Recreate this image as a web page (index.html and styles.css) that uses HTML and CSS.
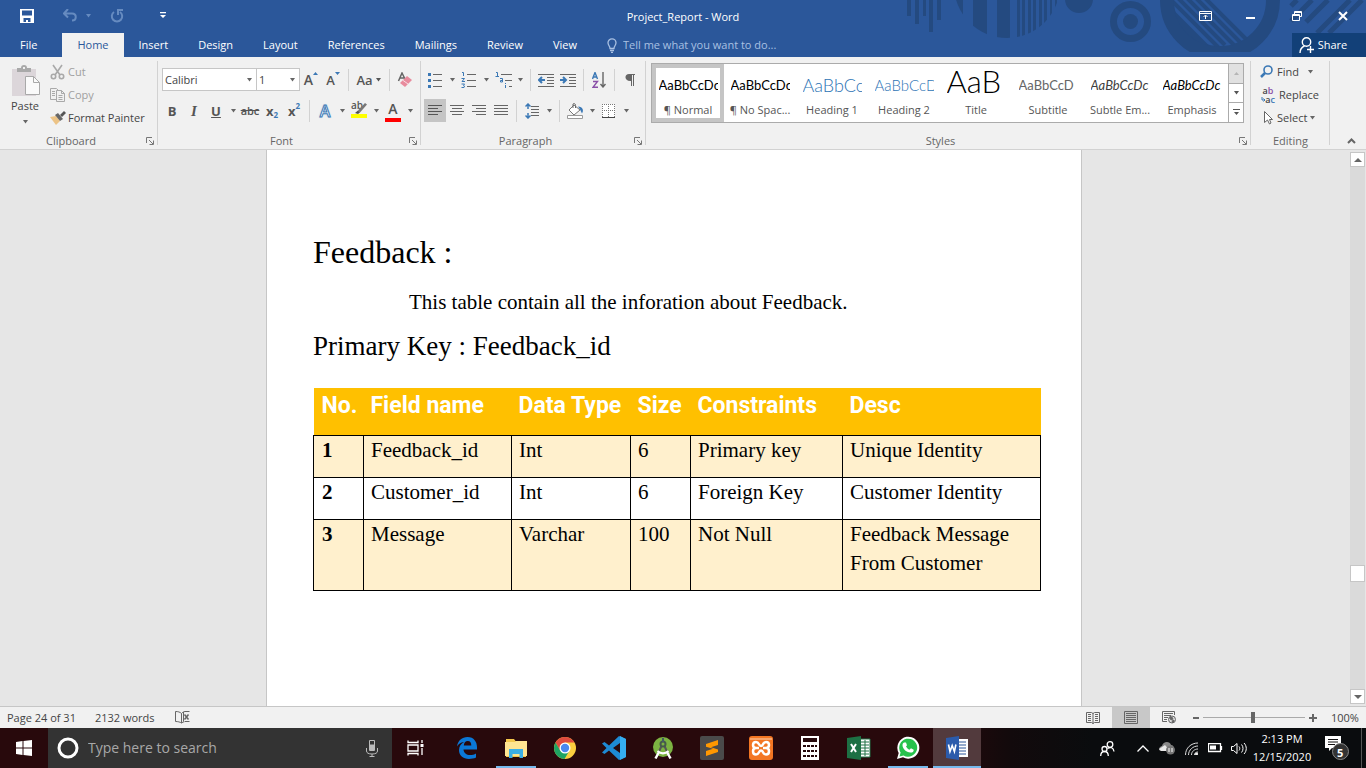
FILE: index.html
```html
<!DOCTYPE html>
<html lang="en">
<head>
<meta charset="utf-8">
<title>Project_Report - Word</title>
<link rel="stylesheet" href="styles.css">
</head>
<body>
<svg class="sprite" aria-hidden="true">
  <symbol id="caret" viewBox="0 0 7 4"><path d="M1 0h5L3.500 3.500z" fill="currentColor"/></symbol>
  <symbol id="launcher" viewBox="0 0 8 8"><path d="M.5 6V.5H6M3 3l4 4M7.500 3.500v4h-4" fill="none" stroke="#777"/></symbol>
</svg>

<header class="header">
  <svg class="header-art" width="461" height="57" viewBox="905 0 461 57" fill="#244a80" aria-hidden="true">
    <defs>
      <clipPath id="disc"><circle cx="1007" cy="-15" r="53"/></clipPath>
      <clipPath id="bowl"><circle cx="1220" cy="0" r="47"/></clipPath>
      <clipPath id="bowl-cut"><rect x="1150" y="0" width="140" height="52"/></clipPath>
    </defs>
    <path d="M907 0h4v16h-4zM915 0h4v24h-4zM923 0h3v16h-3zM929 0h4v32h-4zM937 0h4v20h-4z"/>
    <path clip-path="url(#disc)" d="M954 0h9v40h-9zM973 0h14v40h-14zM997 0h13v40h-13zM1017 0h3v40h-3zM1022 0h3v40h-3zM1028 0h3v40h-3zM1033 0h3v40h-3zM1039 0h3v40h-3zM1044 0h3v40h-3zM1050 0h2v40h-2zM1055 0h2v40h-2z"/>
    <circle cx="1079" cy="-1" r="14"/>
    <circle cx="1130.500" cy="21.500" r="17" fill="none" stroke="#244a80" stroke-width="7"/>
    <circle cx="1130.500" cy="21.500" r="7.500"/>
    <g clip-path="url(#bowl-cut)"><circle cx="1220" cy="0" r="53" fill="none" stroke="#244a80" stroke-width="14"/></g>
    <g clip-path="url(#bowl)" stroke="#244a80" stroke-width="4">
      <path d="M1202-5l50 50M1193-5l50 50M1184-5l50 50M1175-5l50 50M1166-5l55 55"/><path d="M1160 5l50 50" stroke-width="12"/>
    </g>
    <path d="M1291 6l6-6M1291 21l21-21M1306 22l22-22M1317 33l33-33M1329 33l33-33" stroke="#244a80" stroke-width="5"/>
  </svg>
  <div class="titlebar">
    <div class="quick">
      <button class="q-save" aria-label="Save"><svg width="14" height="14" viewBox="0 0 14 14"><path d="M0 0h14v14H0zM2 1.500v5h10v-5zM3.500 9v4H6v-2h2v2h2.500V9z" fill="#fff" fill-rule="evenodd"/></svg></button>
      <button class="q-undo" aria-label="Undo"><svg width="14" height="13" viewBox="0 0 14 13" fill="none" stroke="#668bc0" stroke-width="2"><path d="M5 0L1 4.500 5 8.500M1 4.500h8c5 0 5 7 0 7"/></svg></button>
      <button class="q-caret" aria-label="Undo list"><svg width="7" height="4"><use href="#caret"/></svg></button>
      <button class="q-redo" aria-label="Redo"><svg width="14" height="14" viewBox="0 0 14 14" fill="none" stroke="#668bc0" stroke-width="2"><path d="M4 3a5.200 5.200 0 1 0 6 0M8 6V1h5"/></svg></button>
      <button class="q-more" aria-label="Customize toolbar"><svg width="6" height="7" viewBox="0 0 6 7" fill="#fff"><path d="M0 0h6v1.200H0zM0 3h6L3 6z"/></svg></button>
    </div>
    <h1 class="title">Project_Report - Word</h1>
    <div class="window-buttons">
      <button aria-label="Ribbon display"><svg width="13" height="10" viewBox="0 0 13 10" fill="none" stroke="#fff"><path d="M.5.500h12v9H.5zM.5 2.500h12M6.500 8V4.500M4.500 6l2-2 2 2"/></svg></button>
      <button aria-label="Minimize"><svg width="10" height="10"><path d="M0 6h9v2H0z" fill="#fff"/></svg></button>
      <button aria-label="Restore"><svg width="10" height="10" viewBox="0 0 10 10" fill="none" stroke="#fff"><path d="M2.500 3V.5h7v5H7M2.500 1.500h7M.5 3.500h7v6h-7zM.5 4.500h7"/></svg></button>
      <button aria-label="Close"><svg width="10" height="10" viewBox="0 0 10 10"><path d="M1 1l8 8M9 1L1 9" stroke="#fff" stroke-width="2"/></svg></button>
    </div>
  </div>
  <nav class="tabs">
    <button class="tab tab-file">File</button>
    <button class="tab tab-active">Home</button>
    <button class="tab">Insert</button>
    <button class="tab">Design</button>
    <button class="tab">Layout</button>
    <button class="tab">References</button>
    <button class="tab">Mailings</button>
    <button class="tab">Review</button>
    <button class="tab">View</button>
    <label class="tell">
      <svg width="10" height="15" viewBox="0 0 10 15" fill="none" stroke="#a9c0e2"><path d="M3 10.500C3 8 1 7.500 1 4.800a4 4 0 0 1 8 0C9 7.500 7 8 7 10.500zM3 12.500h4M4 14.300h2" stroke-width="1.300"/></svg>
      <input type="text" aria-label="Tell me" placeholder="Tell me what you want to do...">
    </label>
    <button class="share"><svg width="15" height="16" viewBox="0 0 15 16" fill="none" stroke="#fff" stroke-width="1.400"><circle cx="7.500" cy="5" r="4.200"/><path d="M1 16c0-4 2-6 4.500-7M8 12.500h7M11.500 9v7"/></svg>Share</button>
  </nav>
</header>

<section class="ribbon" aria-label="Ribbon">
  <div class="group g-clipboard">
    <div class="group-body clip-body">
      <button class="paste">
        <svg width="29" height="31" viewBox="0 0 29 31"><path d="M1 4h24v27H1z" fill="#dcd6da"/><path d="M6 7V3h4a3 3 0 0 1 6 0h4v4z" fill="#a9a9a9"/><path d="M12 2h2v2h-2z" fill="#f0f0f0"/><path d="M14.500 11.500h8l6 6v12h-14z" fill="#fafafa" stroke="#a9a9a9"/><path d="M22.500 11.500v6h6" fill="none" stroke="#a9a9a9"/></svg>
        <span>Paste</span>
        <svg width="7" height="4"><use href="#caret"/></svg>
      </button>
      <div class="stack">
        <button class="item item-off"><svg width="16" height="16" viewBox="0 0 16 16" fill="none" stroke="#a9a9a9" stroke-width="1.600"><path d="M3 1l7 10M12 1L5 11"/><circle cx="3.500" cy="12.500" r="2.200"/><circle cx="11.500" cy="12.500" r="2.200"/></svg>Cut</button>
        <button class="item item-off"><svg width="16" height="16" viewBox="0 0 16 16" fill="#f0f0f0" stroke="#a9a9a9"><path d="M.5 1.500h6l2 2v9h-8zM2 4.500h3M2 6.500h3M2 8.500h3"/><path d="M6.500 3.500h5l3 3v8h-8zM8.500 8.500h4M8.500 10.500h4M8.500 12.500h4M11.500 3.500v3h3"/></svg>Copy</button>
        <button class="item"><svg width="16" height="16" viewBox="0 0 16 16"><path d="M0 7l6-1 4 5-4 4z" fill="#ecc386"/><path d="M5 5l3-2 5 6-3 2z" fill="#666"/><path d="M10 5l4-4 2 2-4 4z" fill="#555"/></svg>Format Painter</button>
      </div>
    </div>
    <div class="group-foot"><span>Clipboard</span><button aria-label="Clipboard settings"><svg width="8" height="8"><use href="#launcher"/></svg></button></div>
  </div>

  <div class="group g-font">
    <div class="group-body rows">
      <div class="row">
        <span class="pick pick-font"><select aria-label="Font"><option>Calibri</option></select><svg width="7" height="4"><use href="#caret"/></svg></span>
        <span class="pick pick-size"><select aria-label="Font size"><option>1</option></select><svg width="7" height="4"><use href="#caret"/></svg></span>
        <button class="tool glyph grow" aria-label="Grow font">A<svg width="5" height="3"><path d="M0 3h5L2.500 0z" fill="#3b78b5"/></svg></button>
        <button class="tool glyph shrink" aria-label="Shrink font">A<svg width="5" height="3"><path d="M0 0h5L2.500 3z" fill="#3b78b5"/></svg></button>
        <i class="sep"></i>
        <button class="tool wide glyph">Aa <svg width="7" height="4"><use href="#caret"/></svg></button>
        <i class="sep"></i>
        <button class="tool" aria-label="Clear formatting"><svg width="16" height="16" viewBox="0 0 16 16"><path d="M1.500 9L5 1l3 6M3 6h4" fill="none" stroke="#666" stroke-width="1.500"/><path d="M10 4l5 4-7 7-5-4z" fill="#e88b9d"/><path d="M5.500 8l5.500 4" stroke="#f7dfe3"/></svg></button>
      </div>
      <div class="row">
        <button class="tool glyph bold">B</button>
        <button class="tool glyph ital">I</button>
        <button class="tool glyph under">U</button>
        <button class="drop" aria-label="Underline styles"><svg width="7" height="4"><use href="#caret"/></svg></button>
        <button class="tool glyph strike">abc</button>
        <button class="tool glyph script-btn">x<sub>2</sub></button>
        <button class="tool glyph script-btn">x<sup>2</sup></button>
        <i class="sep"></i>
        <button class="tool glyph effect">A</button>
        <button class="drop" aria-label="Text effects list"><svg width="7" height="4"><use href="#caret"/></svg></button>
        <button class="tool glyph mark" aria-label="Highlight">ab<svg width="16" height="15" viewBox="0 0 16 15"><path d="M14 0l2 1.500-7 8-2-2z" fill="#777"/><path d="M4 10l3-2.500 2 2L7 11z" fill="#555"/><path d="M0 11h16v4H0z" fill="#ff0"/></svg></button>
        <button class="drop" aria-label="Highlight colors"><svg width="7" height="4"><use href="#caret"/></svg></button>
        <button class="tool glyph color">A</button>
        <button class="drop" aria-label="Font colors"><svg width="7" height="4"><use href="#caret"/></svg></button>
      </div>
    </div>
    <div class="group-foot"><span>Font</span><button aria-label="Font settings"><svg width="8" height="8"><use href="#launcher"/></svg></button></div>
  </div>

  <div class="group g-para">
    <div class="group-body rows">
      <div class="row">
        <button class="tool" aria-label="Bullets"><svg width="16" height="16" viewBox="0 0 16 16"><path d="M6 2.500h9M6 8.500h9M6 14.500h9" stroke="#666"/><path d="M1 1h3v3H1zM1 7h3v3H1zM1 13h3v3H1z" fill="#3b78b5"/></svg></button>
        <button class="drop" aria-label="Bullet styles"><svg width="7" height="4"><use href="#caret"/></svg></button>
        <button class="tool" aria-label="Numbering"><svg width="16" height="16" viewBox="0 0 16 16"><path d="M6 2.500h9M6 8.500h9M6 14.500h9" stroke="#666"/><path d="M1 .5h1.500V4M.5 6.500h3L1 9.500h3M.5 12h3l-1 1.500 1 .5-.5 1.500H.5" fill="none" stroke="#3b78b5"/></svg></button>
        <button class="drop" aria-label="Number styles"><svg width="7" height="4"><use href="#caret"/></svg></button>
        <button class="tool" aria-label="Multilevel list"><svg width="17" height="16" viewBox="0 0 17 16"><path d="M6 2.500h11M10 8.500h7M14 14.500h3" stroke="#666"/><path d="M1 .5h1.500V4M.5 4.500h3.500M5 6.500h2.500v3.500M7.500 8.500h-2v1.500h2M10.500 11v1M10.500 13v3" fill="none" stroke="#3b78b5"/></svg></button>
        <button class="drop" aria-label="List levels"><svg width="7" height="4"><use href="#caret"/></svg></button>
        <i class="sep"></i>
        <button class="tool" aria-label="Decrease indent"><svg width="16" height="14" viewBox="0 0 16 14"><path d="M0 1.500h16M9 4.500h7M9 7.500h7M9 10.500h7M0 13.500h16" stroke="#666"/><path d="M7 7H1M4 4L1 7l3 3" stroke="#3b78b5" stroke-width="2" fill="none"/></svg></button>
        <button class="tool" aria-label="Increase indent"><svg width="16" height="14" viewBox="0 0 16 14"><path d="M0 1.500h16M9 4.500h7M9 7.500h7M9 10.500h7M0 13.500h16" stroke="#666"/><path d="M0 7h6M3 4l3 3-3 3" stroke="#3b78b5" stroke-width="2" fill="none"/></svg></button>
        <i class="sep"></i>
        <button class="tool" aria-label="Sort"><svg width="14" height="16" viewBox="0 0 14 16" fill="none" stroke-width="1.400"><path d="M.5 7l2.500-6.500L5.500 7M1.500 5h3" stroke="#3b78b5"/><path d="M1 9.500h4.500L1 15.300h5" stroke="#8a50a8"/><path d="M11 0v15M8.500 12l2.500 3 2.500-3" stroke="#666"/></svg></button>
        <i class="sep"></i>
        <button class="tool" aria-label="Show marks"><svg width="10" height="12" viewBox="0 0 10 12"><path d="M10 0v1H9v11H8V1H7v11H6V7C-1 7.500-1 0 4 0z" fill="#666"/></svg></button>
      </div>
      <div class="row">
        <button class="tool tool-on" aria-label="Align left"><svg width="14" height="12" viewBox="0 0 14 12" stroke="#555"><path d="M0 .5h14M0 3.500h10M0 6.500h14M0 9.500h10"/></svg></button>
        <button class="tool" aria-label="Center"><svg width="14" height="12" viewBox="0 0 14 12" stroke="#666"><path d="M0 .5h14M2 3.500h10M0 6.500h14M2 9.500h10"/></svg></button>
        <button class="tool" aria-label="Align right"><svg width="14" height="12" viewBox="0 0 14 12" stroke="#666"><path d="M0 .5h14M4 3.500h10M0 6.500h14M4 9.500h10"/></svg></button>
        <button class="tool" aria-label="Justify"><svg width="14" height="12" viewBox="0 0 14 12" stroke="#666"><path d="M0 .5h14M0 3.500h14M0 6.500h14M0 9.500h14"/></svg></button>
        <i class="sep"></i>
        <button class="tool" aria-label="Line spacing"><svg width="14" height="16" viewBox="0 0 14 16" fill="none"><path d="M6 3.500h8M6 6.500h8M6 9.500h8M6 12.500h8" stroke="#666"/><path d="M3 1v5M.5 3.500L3 1l2.500 2.500M3 15v-5M.5 12.500L3 15l2.500-2.500" stroke="#3b78b5" stroke-width="1.500"/></svg></button>
        <button class="drop" aria-label="Line spacing list"><svg width="7" height="4"><use href="#caret"/></svg></button>
        <i class="sep"></i>
        <button class="tool" aria-label="Shading"><svg width="17" height="16" viewBox="0 0 17 16"><path d="M7 2l6 5-6 5-5-5z" fill="#fff" stroke="#777"/><path d="M6 5V1c1-1 3 0 2.500 1.500V5" fill="none" stroke="#666"/><path d="M11 3.500c5 0 6 4 4 7l-2-4z" fill="#3b78b5"/><path d="M.5 12.500h15v3H.5z" fill="#fff" stroke="#999"/></svg></button>
        <button class="drop" aria-label="Shading colors"><svg width="7" height="4"><use href="#caret"/></svg></button>
        <button class="tool" aria-label="Borders"><svg width="14" height="14" viewBox="0 0 14 14" fill="#fff" stroke="#777"><path d="M0 0h13v13H0z" stroke="none"/><path d="M0 .5h13M12.500 0v13M.5 0v13M6.500 0v13M0 6.500h13" stroke-dasharray="1 1"/><path d="M0 13.500h13" stroke="#444"/></svg></button>
        <button class="drop" aria-label="Border styles"><svg width="7" height="4"><use href="#caret"/></svg></button>
      </div>
    </div>
    <div class="group-foot"><span>Paragraph</span><button aria-label="Paragraph settings"><svg width="8" height="8"><use href="#launcher"/></svg></button></div>
  </div>

  <div class="group g-styles">
    <div class="group-body">
      <div class="gallery">
        <button class="style style-on"><span class="sample">AaBbCcDc</span><span>¶ Normal</span></button>
        <button class="style"><span class="sample">AaBbCcDc</span><span>¶ No Spac...</span></button>
        <button class="style"><span class="sample s-h1">AaBbCc</span><span>Heading 1</span></button>
        <button class="style"><span class="sample s-h2">AaBbCcD</span><span>Heading 2</span></button>
        <button class="style"><span class="sample s-title">AaB</span><span>Title</span></button>
        <button class="style"><span class="sample s-sub">AaBbCcD</span><span>Subtitle</span></button>
        <button class="style"><span class="sample s-subtle">AaBbCcDc</span><span>Subtle Em...</span></button>
        <button class="style"><span class="sample s-em">AaBbCcDc</span><span>Emphasis</span></button>
        <div class="gallery-nav">
          <button class="nav-off" aria-label="Previous styles"><svg width="5" height="3"><path d="M0 3h5L2.500 0z" fill="#b5b5b5"/></svg></button>
          <button aria-label="Next styles"><svg width="7" height="4"><use href="#caret"/></svg></button>
          <button aria-label="All styles"><svg width="7" height="7" viewBox="0 0 7 7" fill="#555"><path d="M0 0h7v1H0zM1 3h5L3.500 6z"/></svg></button>
        </div>
      </div>
    </div>
    <div class="group-foot"><span>Styles</span><button aria-label="Styles settings"><svg width="8" height="8"><use href="#launcher"/></svg></button></div>
  </div>

  <div class="group g-edit">
    <div class="group-body">
      <div class="stack">
        <button class="item"><svg width="16" height="16" viewBox="0 0 16 16" fill="none" stroke="#3b78b5"><circle cx="9" cy="6" r="4" stroke-width="1.600"/><path d="M6 9l-4 4" stroke-width="2.500"/></svg>Find <svg class="item-caret gap" width="7" height="4"><use href="#caret"/></svg></button>
        <button class="item"><span class="replace-icon"><b>a<em>b</em></b><b><svg width="4" height="5"><path d="M1 0v3h3M2.500 1.500L4 3 2.500 4.500" fill="none" stroke="#3b78b5"/></svg>a<i>c</i></b></span>Replace</button>
        <button class="item"><svg width="16" height="16" viewBox="0 0 16 16"><path d="M5.500 1.500v11l3-2.500 2 4 1.500-1-1.500-3.500h3z" fill="#fff" stroke="#666"/></svg>Select<svg class="item-caret" width="7" height="4"><use href="#caret"/></svg></button>
      </div>
    </div>
    <div class="group-foot"><span>Editing</span></div>
  </div>
  <button class="collapse" aria-label="Collapse ribbon"><svg width="9" height="6" viewBox="0 0 9 6"><path d="M1 5l3.500-3.500L8 5" fill="none" stroke="#666" stroke-width="2"/></svg></button>
</section>

<main class="workspace">
  <div class="canvas">
    <article class="page">
      <h2 class="doc-heading">Feedback :</h2>
      <p class="doc-text">This table contain all the inforation about Feedback.</p>
      <h3 class="doc-key">Primary Key : Feedback_id</h3>
      <table class="fields">
        <colgroup><col class="c-no"><col class="c-name"><col class="c-type"><col class="c-size"><col class="c-cons"><col></colgroup>
        <thead><tr><th>No.</th><th>Field name</th><th>Data Type</th><th>Size</th><th>Constraints</th><th>Desc</th></tr></thead>
        <tbody>
          <tr><th>1</th><td>Feedback_id</td><td>Int</td><td>6</td><td>Primary key</td><td>Unique Identity</td></tr>
          <tr><th>2</th><td>Customer_id</td><td>Int</td><td>6</td><td>Foreign Key</td><td>Customer Identity</td></tr>
          <tr><th>3</th><td>Message</td><td>Varchar</td><td>100</td><td>Not Null</td><td>Feedback Message From Customer</td></tr>
        </tbody>
      </table>
    </article>
  </div>
  <div class="scroll">
    <button aria-label="Scroll up"><svg width="8" height="4"><path d="M0 4h8L4 0z" fill="#666"/></svg></button>
    <div class="track"><div class="thumb"></div></div>
    <button aria-label="Scroll down"><svg width="8" height="4"><path d="M0 0h8L4 4z" fill="#666"/></svg></button>
  </div>
</main>

<footer class="status">
  <span>Page 24 of 31</span>
  <span class="words">2132 words</span>
  <svg width="15" height="13" viewBox="0 0 15 13" fill="none" stroke="#666"><path d="M6.500 12V2.500C5 1 3 .5.5.500v10c2.500 0 4.500.5 6 1.500 1-.8 2-1.200 3-1.300M6.500 2.500c1-1.200 2-1.700 3.500-2"/><path d="M9.500 3.500l4 5M13.500 3.500l-4 5" stroke-width="1.500"/><path d="M8.500 1v9.500M10 .5h4.500M10 10.500h4.500" /></svg>
  <div class="views">
    <button aria-label="Read mode"><svg width="14" height="12" viewBox="0 0 14 12" fill="none" stroke="#666"><path d="M.5.500h5l1.500 1 1.500-1h5v10h-5L7 11.500l-1.500-1h-5zM7 1v11M2 2.500h3M2 4.500h3M2 6.500h3M2 8.500h3M9 2.500h3M9 4.500h3M9 6.500h3M9 8.500h3"/></svg></button>
    <button class="view-on" aria-label="Print layout"><svg width="14" height="13" viewBox="0 0 14 13" fill="none" stroke="#666"><path d="M.5.500h13v12H.5zM2 2.500h10M2 4.500h10M2 6.500h10M2 8.500h10M2 10.500h10"/></svg></button>
    <button aria-label="Web layout"><svg width="15" height="13" viewBox="0 0 15 13" fill="none" stroke="#666"><path d="M12.500 4V.5H.5v10H5M2 2.500h9M2 4.500h7M2 6.500h4M2 8.500h3"/><circle cx="10" cy="8.500" r="3.500" fill="#ddd"/><path d="M8 6l3 1-1 2-2-1zM10 10l2-1-1 3z" fill="#666"/></svg></button>
  </div>
  <div class="zoom">
    <button aria-label="Zoom out"><svg width="6" height="8"><path d="M0 3h6v2H0z" fill="#666"/></svg></button>
    <input type="range" min="0" max="100" value="49" aria-label="Zoom">
    <button aria-label="Zoom in"><svg width="8" height="8"><path d="M3 0h2v3h3v2H5v3H3V5H0V3h3z" fill="#666"/></svg></button>
    <span class="pct">100%</span>
  </div>
</footer>

<footer class="taskbar">
  <button class="start" aria-label="Start"><svg width="16" height="16" viewBox="0 0 16 16" fill="#fff"><path d="M0 2l6.500-1v6.500H0zM7.500 1L16 0v7.500H7.500zM0 8.500h6.500V15L0 14zM7.500 8.500H16V16l-8.500-1z"/></svg></button>
  <label class="search">
    <svg width="22" height="22"><circle cx="11" cy="11" r="9" fill="none" stroke="#fff" stroke-width="3"/></svg>
    <input type="text" aria-label="Search" placeholder="Type here to search">
    <svg width="12" height="17" viewBox="0 0 12 17" fill="none" stroke="#bbb"><path d="M3.500.500h5v10h-5z"/><path d="M4 5h4v5H4z" fill="#bbb"/><path d="M.5 8v3c0 2 2 3 5.500 3s5.500-1 5.500-3V8M6 14v2.500M3.500 16.500h5"/></svg>
  </label>
  <button class="app view-switch" aria-label="Task view"><svg width="18" height="16" viewBox="0 0 18 16" fill="none" stroke="#fff" stroke-width="1.300"><path d="M1 .5v2h10v-2M1 15.500v-2h10v2M1 5h10v6H1zM15 0v3M15 8v7"/><path d="M13.500 4h3v3h-3z" fill="#fff" stroke="none"/></svg></button>
  <button class="app" aria-label="Edge"><svg width="20" height="22" viewBox="0 0 20 22"><path d="M0 9.500C1 3.500 5 0 10.500 0 17 0 20 5 20 10v2.500H6.500c.2 3.500 3 5.500 6.500 5.500 2 0 4.500-.7 6-1.600v4.200C17 21.600 14.500 22 12 22c-6 0-10-3.500-10-9 0-3.500 2-6.500 5-8C3.500 5.500 1.500 7 0 9.500zM6.800 8.500h7.500c0-2.500-1-4.500-3.500-4.500S7 6 6.800 8.500z" fill="#0b78d7"/></svg></button>
  <button class="app running" aria-label="File Explorer"><svg width="22" height="20" viewBox="0 0 22 20"><path d="M1 1h8l1.500 2H21v16H1z" fill="#f5c84c"/><path d="M1 4h9l1-1h11v15H0V4z" fill="#ffe592"/><path d="M4 11h14v9h-3.500v-4h-7v4H4z" fill="#3cb0e6"/></svg></button>
  <button class="app" aria-label="Chrome"><svg width="24" height="24" viewBox="0 0 24 24"><circle cx="12" cy="12" r="11" fill="#fbcf3f"/><path d="M2.500 6.500A11 11 0 0 1 21.500 6.500H12L7.200 14.800z" fill="#df4b3f"/><path d="M2.500 6.500A11 11 0 0 0 11.500 23l5-8.500L12 17l-4.800-2.500z" fill="#1fa463"/><circle cx="12" cy="12" r="5.500" fill="#fff"/><circle cx="12" cy="12" r="4.200" fill="#4a88ef"/></svg></button>
  <button class="app" aria-label="Visual Studio Code"><svg width="24" height="24" viewBox="0 0 24 24"><path d="M17 0l7 3v18l-7 3L7 14.500 2.500 18 0 16.500 4.500 12 0 7.500 2.500 6 7 9.500zM18 7l-7 5 7 5z" fill="#1d8ad4" fill-rule="evenodd"/><path d="M18 0l6 3v18l-6 3z" fill="#35aef2"/></svg></button>
  <button class="app" aria-label="Android Studio"><svg width="22" height="24" viewBox="0 0 22 24"><circle cx="11" cy="11" r="10" fill="#7cb342"/><path d="M9.500 10L5 20M12.500 10L17 20" stroke="#555" stroke-width="2"/><path d="M7 16L3.500 22.500M15 16l3.500 6.500" stroke="#fff" stroke-width="2.500"/><path d="M5.500 15c3.500 3 7.500 3 11 0" fill="none" stroke="#fff" stroke-width="2"/><circle cx="11" cy="8" r="2.500" fill="none" stroke="#455a4b" stroke-width="2"/><path d="M10 2h2v4h-2z" fill="#455a64"/></svg></button>
  <button class="app" aria-label="Sublime Text"><svg width="24" height="24" viewBox="0 0 24 24"><rect width="24" height="24" rx="2" fill="#4a4a4a"/><path d="M6 8l12-4v5l-7 2.300 7 2.200V16L6 20v-5l7-2.200-7-2z" fill="#ff9800"/></svg></button>
  <button class="app" aria-label="XAMPP"><svg width="24" height="24" viewBox="0 0 24 24"><rect width="24" height="24" rx="3" fill="#f37623"/><path d="M1 2h22v2H1z" fill="#f9a66c"/><path d="M10 12H7c-4 0-4-6 0-6 3.500 0 2.500 4 5 4s1.500-4 5-4c4 0 4 6 0 6h-3M7 12c-4 0-4 6.500 0 6.500 3.500 0 2.500-4 5-4s1.500 4 5 4c4 0 4-6.500 0-6.500" fill="none" stroke="#fff" stroke-width="2.500"/></svg></button>
  <button class="app" aria-label="Calculator"><svg width="18" height="24" viewBox="0 0 18 24"><path d="M0 0h18v24H0z" fill="#fff"/><path d="M2 2h14v4H2zM2 9h3v2H2zM6 9h3v2H6zM10 9h3v2h-3zM14 9h2v2h-2zM2 14h3v2H2zM6 14h3v2H6zM10 14h3v2h-3zM14 14h2v2h-2zM2 19h3v2H2zM6 19h3v2H6zM10 19h3v2h-3zM14 19h2v2h-2z" fill="#26090c"/></svg></button>
  <button class="app" aria-label="Excel"><svg width="24" height="24" viewBox="0 0 24 24"><path d="M12 3h11v18H12z" fill="#fff" stroke="#217346"/><path d="M14 6h8M14 9h8M14 12h8M14 15h8M14 18h8M18 4v16" stroke="#217346"/><path d="M0 2l14-2v24L0 22z" fill="#1d7044"/><path d="M4 8l5 8M9 8l-5 8" stroke="#fff" stroke-width="2"/></svg></button>
  <button class="app running" aria-label="WhatsApp"><svg width="24" height="24" viewBox="0 0 24 24"><path d="M1 23l1.700-6A11 11 0 1 1 7 21.300z" fill="#fff"/><path d="M3.500 20.500l1.100-4a9 9 0 1 1 3 2.900z" fill="#27c24c"/><path d="M8 6.500l2 0 1 2.800-1 1.300c1 1.700 2 2.500 3.500 3.200l1.500-1.500 2.700 1.400c.2 2-1.500 3-3.200 2.900C10 16.500 6.300 12 6.500 9c0-1 .5-2 1.500-2.500z" fill="#fff"/></svg></button>
  <button class="app running active" aria-label="Word"><svg width="22" height="24" viewBox="0 0 22 24"><path d="M11 3h11v18H11z" fill="#fff"/><path d="M13 6h7M13 9h7M13 12h7M13 15h7M13 18h7" stroke="#2b579a"/><path d="M0 2l13-2v24L0 22z" fill="#2b5bab"/><path d="M2.500 8.500l1.500 7 2.200-6 2.200 6 1.500-7" fill="none" stroke="#fff" stroke-width="1.600"/></svg></button>
  <div class="tray">
    <button class="people" aria-label="People"><svg width="15" height="15" viewBox="0 0 15 15" fill="none" stroke="#fff" stroke-width="1.300"><circle cx="10" cy="3.500" r="2.800"/><circle cx="4.500" cy="8" r="2.500"/><path d="M.7 15c0-3 1.500-4.500 3.800-4.500S8.300 12 8.300 15M7.500 7.500c3-2 6-1 6.500 3"/></svg></button>
    <button aria-label="Hidden icons"><svg width="12" height="7" viewBox="0 0 12 7"><path d="M.5 6.500L6 1l5.500 5.500" fill="none" stroke="#fff" stroke-width="1.300"/></svg></button>
    <button aria-label="OneDrive"><svg width="16" height="14" viewBox="0 0 16 14"><path d="M0 9c0-3 2-4 3-4 1-5 8-5 9-1 2 0 3 2 3 4l-8 2H2z" fill="#888"/><path d="M0 8l6-4 5 6H2z" fill="#e8e8e8"/><circle cx="11.500" cy="9" r="4.500" fill="#777"/><path d="M10 7v4M13 7v4" stroke="#fff"/></svg></button>
    <button aria-label="Wi-Fi"><svg width="13" height="13" viewBox="0 0 13 13" fill="none" stroke="#ddd"><path d="M.5 13C.5 6 6 1 13 1M3.500 13c0-5 4.500-9 9.500-9M6.500 13c0-3.500 3-6 6.500-6M9.500 13c0-2 1.500-3 3.500-3"/><path d="M10.500 11h2v2h-2z" fill="#fff"/></svg></button>
    <button aria-label="Battery"><svg width="15" height="10" viewBox="0 0 15 10"><path d="M.5.500h12v8H.5zM13.500 3v4" fill="none" stroke="#fff" stroke-width="1.300"/><path d="M2 2.500h6v4H2z" fill="#fff"/></svg></button>
    <button class="vol" aria-label="Volume"><svg width="17" height="13" viewBox="0 0 17 13" fill="none" stroke="#fff"><path d="M.5 4.500h2l3.500-3v10l-3.500-3h-2zM8 4.500c1 1 1 3 0 4M10.500 2.500c2 2 2 6 0 8M13 1c3 3 3 8 0 11"/></svg></button>
    <button class="clock"><span>2:13 PM</span><span>12/15/2020</span></button>
    <button class="notice" aria-label="Notifications, 5 new"><svg width="24" height="24" viewBox="0 0 24 24"><path d="M0 0h16v12H7l-3 3v-3H0z" fill="#fff"/><path d="M3 3.500h10M3 6h10M3 8.500h7" stroke="#111"/><circle cx="15.500" cy="15.500" r="8" fill="#333" stroke="#888"/></svg><span class="badge">5</span></button>
    <i class="peek"></i>
  </div>
</footer>
</body>
</html>
```
FILE: styles.css
```css
* { box-sizing: border-box; }
html, body { height: 100%; }
body {
  margin: 0;
  display: flex;
  flex-direction: column;
  overflow: hidden;
  font: 11px/16px "Open Sans", "Noto Sans", sans-serif;
  color: #444;
  background: #e6e6e6;
}
button, input, select { font: inherit; color: inherit; border: 0; background: none; padding: 0; margin: 0; }
button { display: flex; align-items: center; justify-content: center; flex: none; white-space: nowrap; }
h1, h2, h3, p { margin: 0; font-weight: 400; }
svg { display: block; flex: none; }
.sprite { position: absolute; width: 0; height: 0; }

/* Title bar and tabs */
.header { position: relative; flex: none; background: #2b579a; color: #fff; }
.header-art { position: absolute; top: 0; right: 0; }
.titlebar { position: relative; display: grid; grid-template-columns: 1fr auto 1fr; align-items: center; height: 33px; padding-bottom: 2px; }
.quick { display: flex; align-items: center; padding-left: 20px; }
.q-undo { margin-left: 29px; }
.q-caret { margin-left: 8px; color: #668bc0; }
.q-redo { margin-left: 18px; }
.q-more { margin-left: 36px; }
.title { font-size: 11px; padding-top: 3px; }
.window-buttons { display: flex; justify-content: flex-end; }
.window-buttons button { width: 46px; height: 30px; }
.tabs { position: relative; display: flex; height: 24px; }
.tab { padding: 0 15px; }
.tab-file { padding: 0 25px 0 20px; }
.tab-active { background: #f1f1f1; color: #2b579a; }
.tell { display: flex; align-items: center; gap: 6px; flex: 1; padding-left: 15px; }
.tell input { flex: 1; }
.tell input::placeholder { color: #a9c0e2; opacity: 1; }
.share { gap: 4px; width: 74px; padding-right: 12px; background: #124078; }

/* Ribbon */
.ribbon { display: flex; flex: none; background: #f1f1f1; border-bottom: 1px solid #d2d2d2; color: #444; }
.group { display: flex; flex-direction: column; flex: none; position: relative; }
.group::after { content: ""; position: absolute; right: 0; top: 4px; bottom: 4px; width: 1px; background: #d2d2d2; }
.group-body { height: 76px; }
.group-foot { display: flex; height: 16px; color: #666; }
.group-foot span { flex: 1; text-align: center; }
.group-foot button { width: 16px; }
.g-clipboard { width: 158px; }
.g-font { width: 263px; }
.g-para { width: 225px; }
.g-styles { flex: 1; min-width: 0; }
.g-edit { width: 79px; }
.clip-body { display: flex; }
.paste { flex-direction: column; justify-content: flex-start; width: 50px; padding-top: 8px; gap: 2px; }
.paste svg:last-child { margin-top: 4px; color: #666; }
.stack { display: flex; flex-direction: column; padding-top: 3px; }
.item { height: 23px; gap: 2px; justify-content: flex-start; }
.item-off { color: #a0a0a0; }
.item-caret { color: #666; }
.item-caret.gap { margin-left: 6px; }
.g-edit .stack { padding-left: 8px; }
.replace-icon { width: 18px; font-size: 9px; line-height: 9px; }
.replace-icon b { display: flex; justify-content: center; align-items: center; font-weight: 600; }
.replace-icon em { font-style: normal; color: #8a50a8; }
.replace-icon i { font-style: normal; color: #3b78b5; }
.rows { display: flex; flex-direction: column; gap: 8px; padding: 11px 3px 0; }
.row { display: flex; align-items: center; height: 23px; }
.tool { width: 22px; height: 23px; }
.tool-on { background: #c5c5c5; }
.tool.wide { width: 32px; gap: 2px; }
.drop { width: 12px; height: 23px; color: #666; }
.sep { width: 1px; height: 22px; margin: 0 4px; background: #d2d2d2; }
.pick { position: relative; }
.pick svg { position: absolute; right: 4px; top: 10px; color: #666; }
.pick select { appearance: none; width: 100%; height: 23px; padding: 0 2px; background: #fff; border: 1px solid #c6c6c6; border-radius: 0; }
.pick-font { width: 95px; margin-left: 1px; }
.pick-size { width: 44px; margin-left: -1px; }
.glyph { font-size: 13px; font-weight: 600; color: #555; }
.grow { font-size: 14px; }
.grow svg, .shrink svg { align-self: flex-start; margin-top: 4px; }
.bold { font-weight: 700; }
.ital { font-family: "Liberation Serif", serif; font-style: italic; font-size: 15px; font-weight: 700; }
.under { text-decoration: underline; font-weight: 700; }
.strike { text-decoration: line-through; font-size: 11px; }
.script-btn { font-weight: 700; }
.script-btn sub, .script-btn sup { font-size: 8px; line-height: 8px; color: #3b78b5; }
.script-btn sub { align-self: flex-end; margin-bottom: 3px; }
.script-btn sup { align-self: flex-start; margin-top: 3px; }
.effect { color: #fff; font-size: 16px; -webkit-text-stroke: 1px #3b78b5; text-shadow: 0 0 2px #9cc3e6; }
.mark { position: relative; font-size: 10px; align-items: flex-start; justify-content: flex-start; padding-left: 3px; line-height: 12px; }
.mark svg { position: absolute; left: 3px; top: 4px; }
.color { font-size: 14px; line-height: 13px; background: linear-gradient(#f00, #f00) 50% 19px / 16px 4px no-repeat; padding-bottom: 5px; }

/* Style gallery */
.gallery { display: flex; margin: 6px 7px 0 5px; height: 60px; background: #fff; border: 1px solid #ababab; overflow: hidden; }
.style { flex: 1; min-width: 0; flex-direction: column; justify-content: flex-start; padding: 6px 4px 0; color: #555; border: 3px solid transparent; border-width: 0 3px; }
.style-on { border: 4px solid #c5c5c5; padding: 2px 3px 0; }
.sample { width: 59px; height: 32px; overflow: hidden; text-align: left; font: 13px/30px Lato, "Open Sans", sans-serif; color: #000; }
.s-h1 { font-size: 18px; font-weight: 300; color: #2e74b5; }
.s-h2 { font-size: 15px; font-weight: 300; color: #2e74b5; }
.s-title { font-size: 31px; font-weight: 300; line-height: 23px; }
.s-sub { color: #666; }
.s-subtle { font-style: italic; color: #404040; }
.s-em { font-style: italic; }
.gallery-nav { display: flex; flex-direction: column; width: 15px; border-left: 1px solid #ababab; }
.gallery-nav button { flex: 1; border-bottom: 1px solid #ababab; color: #555; }
.gallery-nav button:last-child { border-bottom: 0; }
.gallery-nav .nav-off { background: #e1e1e1; }
.collapse { width: 36px; align-items: flex-end; padding: 0 0 5px 6px; }

/* Document */
.workspace { flex: 1; min-height: 0; display: flex; }
.canvas { flex: 1; min-width: 0; overflow: hidden; display: flex; justify-content: center; }
.page { width: 100%; max-width: 816px; padding: 82px 40px 0 46px; background: #fff; border: 1px solid #c6c6c6; border-width: 0 1px; color: #000; font-family: "Liberation Serif", serif; }
.doc-heading { font-size: 32px; line-height: 40px; }
.doc-text { margin-top: 15px; padding-left: 96px; font-size: 21px; line-height: 30px; }
.doc-key { margin-top: 9px; font-size: 27px; line-height: 40px; }
.fields { width: 100%; margin-top: 22px; border-collapse: collapse; table-layout: fixed; font-size: 21px; line-height: 29px; }
.c-no { width: 50px; }
.c-name { width: 148px; }
.c-type { width: 119px; }
.c-size { width: 60px; }
.c-cons { width: 152px; }
.fields th, .fields td { padding: 0 7px 12px; text-align: left; vertical-align: top; }
.fields th:first-child { padding-left: 8px; }
.fields tbody th, .fields tbody td { border: 1px solid #000; }
.fields thead th { padding-right: 0; background: #ffc000; color: #fff; font: 700 23px/35px Roboto, sans-serif; white-space: nowrap; }
.fields tbody tr:nth-child(odd) { background: #fff0cd; }
.scroll { display: flex; flex-direction: column; width: 18px; padding: 2px 1px 2px 2px; }
.scroll button { height: 15px; background: #fff; border: 1px solid #c6c6c6; }
.track { flex: 1; display: flex; background: #dadada; padding-top: 398px; }
.thumb { width: 15px; height: 17px; background: #fff; border: 1px solid #c6c6c6; }

/* Status bar */
.status { display: flex; flex: none; align-items: center; height: 22px; padding-left: 7px; background: #f1f1f1; border-top: 1px solid #c6c6c6; }
.words { margin: 0 20px 0 19px; }
.views { display: flex; margin-left: auto; }
.views button { width: 38px; height: 21px; }
.views .view-on { background: #c8c8c8; }
.zoom { display: flex; align-items: center; padding-left: 4px; }
.zoom input { appearance: none; width: 102px; height: 12px; margin: 0 4px; background: linear-gradient(#aaa, #aaa) 50% 50% / 100% 1px no-repeat; }
.zoom input::-webkit-slider-thumb { appearance: none; width: 4px; height: 11px; background: #666; }
.zoom button:first-child { margin-left: 1px; }
.pct { width: 49px; padding-left: 14px; }

/* Taskbar */
.taskbar { display: flex; flex: none; height: 40px; color: #fff; background: linear-gradient(90deg, #28090c 0, #28090c 68%, #120a0c 74%, #0a0c0e 80%); }
.start { width: 48px; }
.search { display: flex; align-items: center; width: 344px; padding: 0 14px 0 9px; gap: 9px; background: #333; }
.search input { flex: 1; min-width: 0; font-size: 14px; line-height: 20px; }
.search input::placeholder { color: #a8a8a8; opacity: 1; }
.app { width: 48px; margin-right: 1px; }
.view-switch { margin-right: 3px; }
.running { background: linear-gradient(#76b9ed, #76b9ed) 50% 100% / 40px 2px no-repeat; }
.active { background: linear-gradient(#76b9ed, #76b9ed) 50% 100% / 48px 2px no-repeat #523a3d; }
.tray { display: flex; margin-left: auto; }
.tray button { width: 24px; }
.tray .people { width: 48px; }
.tray .clock { flex-direction: column; width: 62px; font-size: 11px; line-height: 18px; }
.tray .notice { position: relative; width: 48px; }
.badge { position: absolute; left: 24px; top: 17px; font-size: 11px; font-weight: 700; line-height: 16px; }
.peek { width: 5px; border-left: 1px solid #555; }
```
